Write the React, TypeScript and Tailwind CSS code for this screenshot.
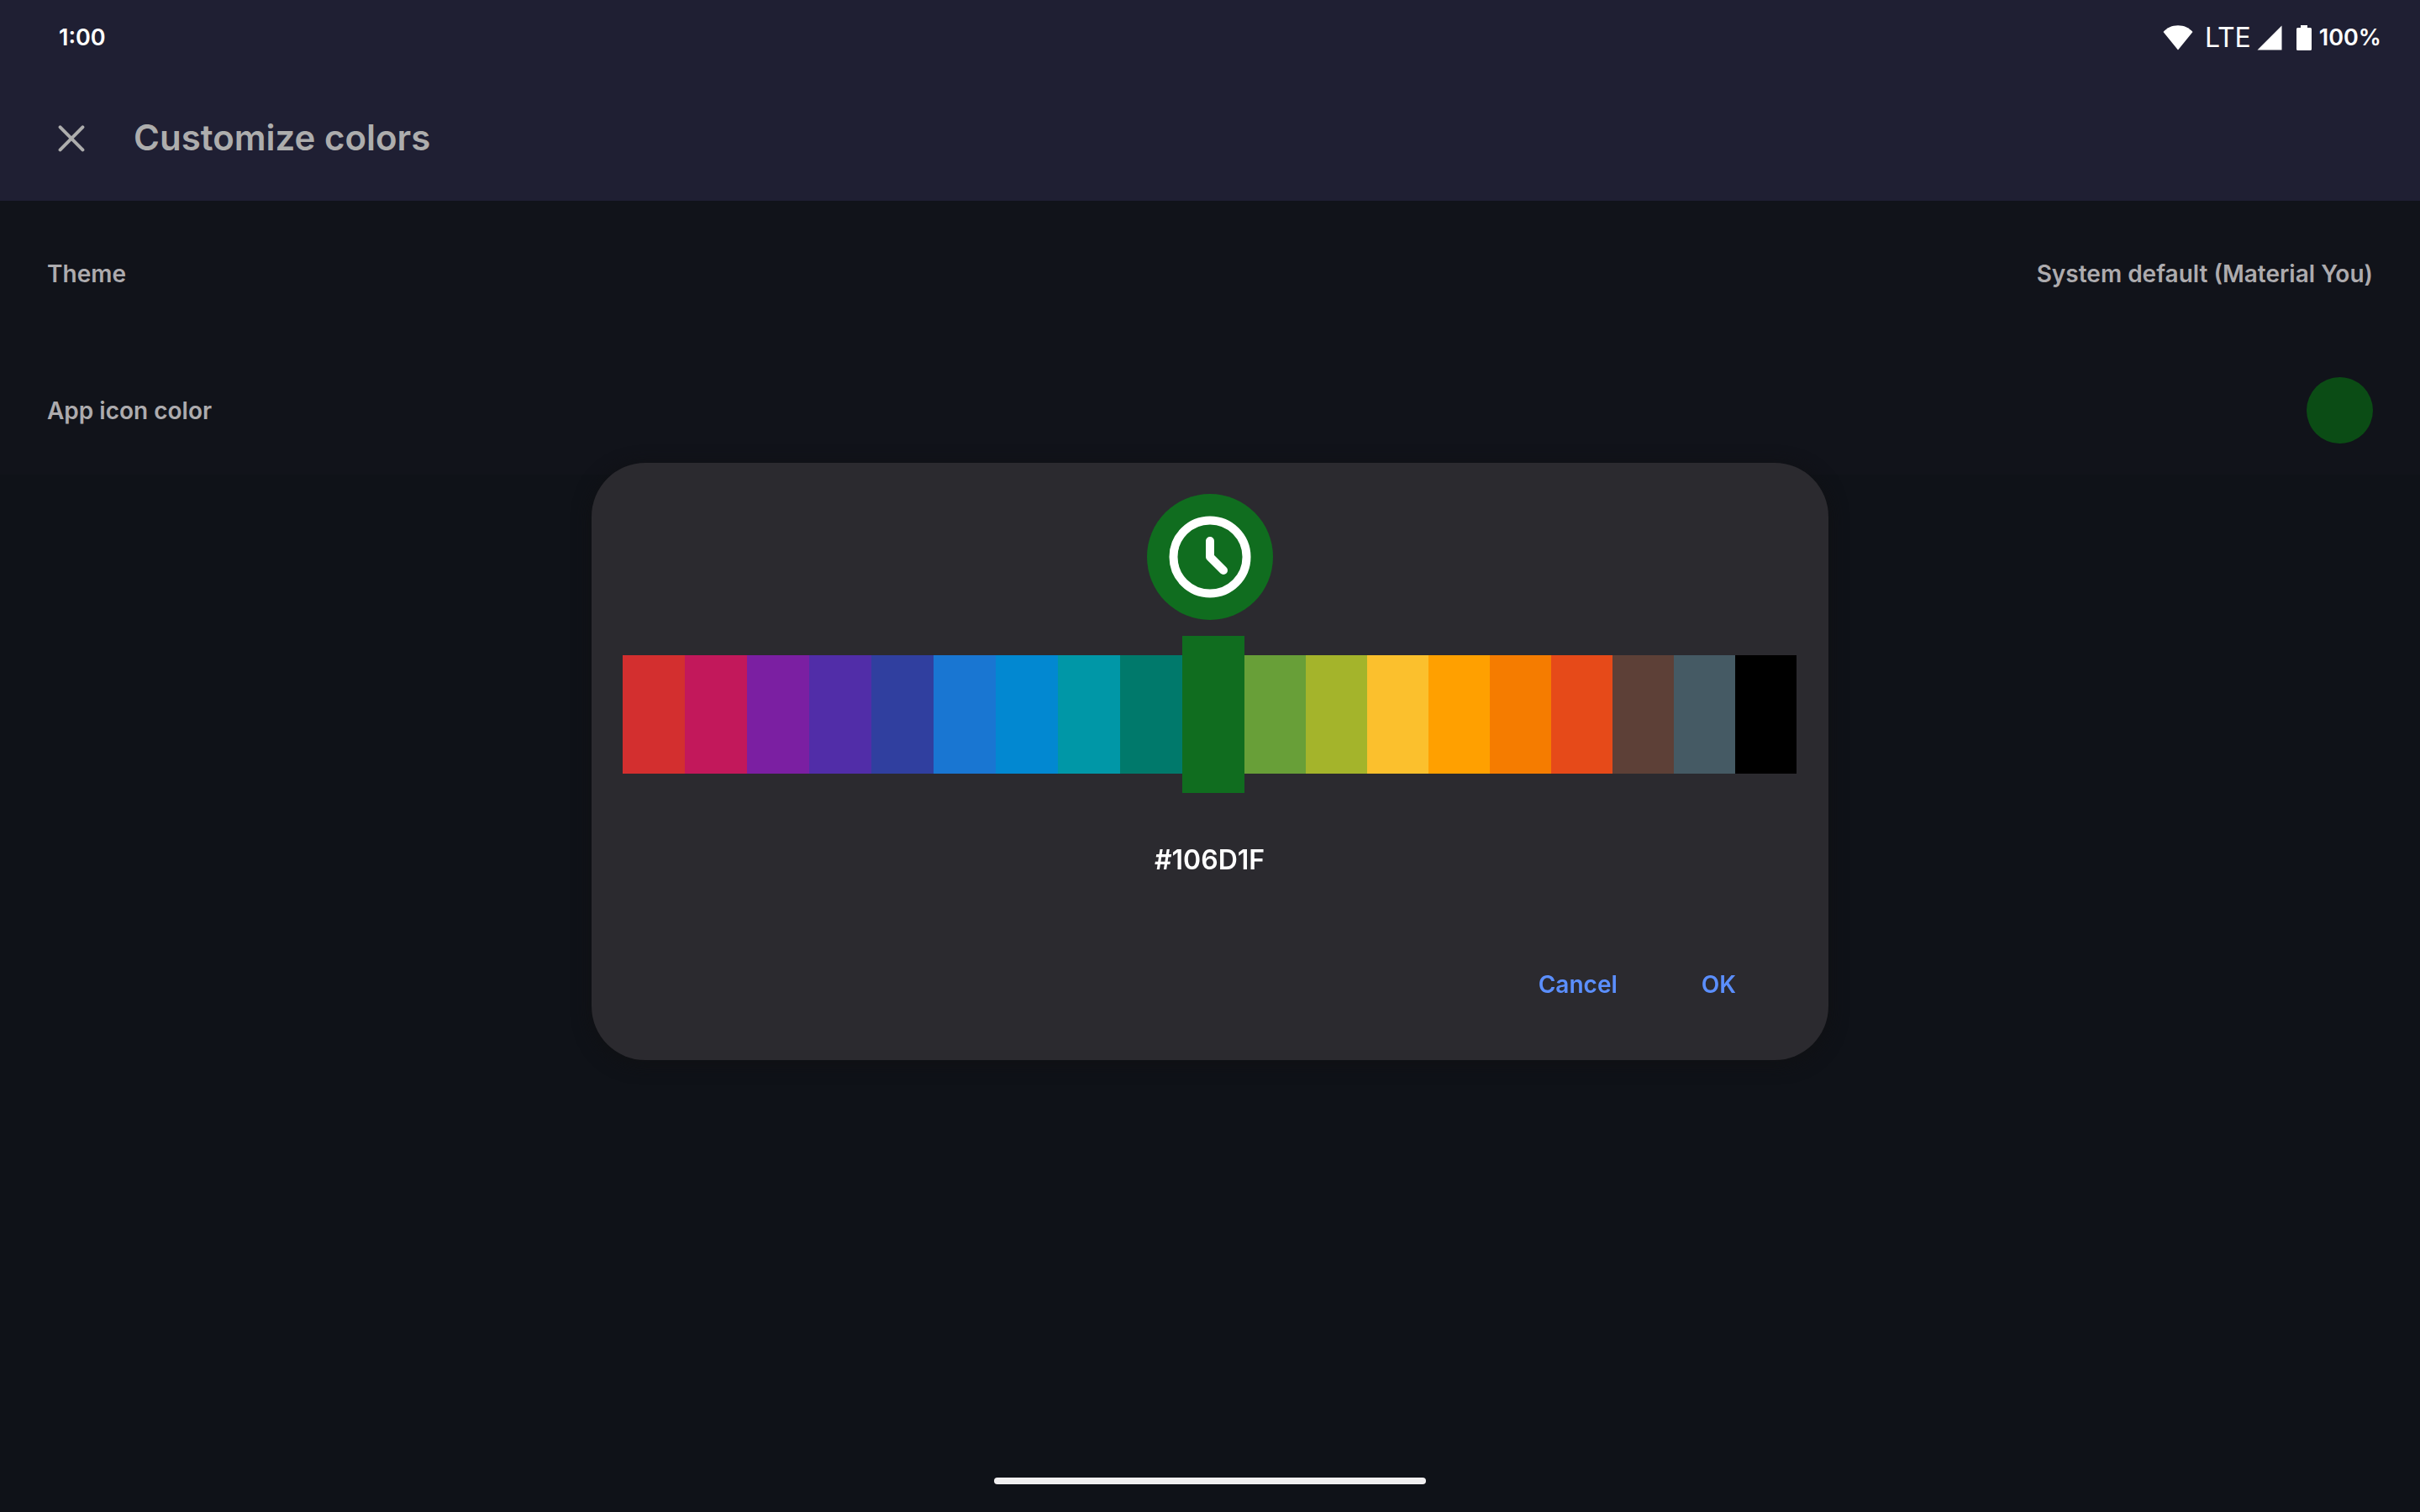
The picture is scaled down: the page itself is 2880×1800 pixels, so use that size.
import React, { useState } from "react";

const SWATCHES = [
  { name: "Red", value: "#D32F2F" },
  { name: "Pink", value: "#C2185B" },
  { name: "Purple", value: "#7B1FA2" },
  { name: "Deep purple", value: "#512DA8" },
  { name: "Indigo", value: "#303F9F" },
  { name: "Blue", value: "#1976D2" },
  { name: "Light blue", value: "#0288D1" },
  { name: "Cyan", value: "#0097A7" },
  { name: "Teal", value: "#00796B" },
  { name: "Green", value: "#106D1F" },
  { name: "Light green", value: "#689F38" },
  { name: "Lime", value: "#A4B42B" },
  { name: "Yellow", value: "#FBC02D" },
  { name: "Amber", value: "#FFA000" },
  { name: "Orange", value: "#F57C00" },
  { name: "Deep orange", value: "#E64A19" },
  { name: "Brown", value: "#5D4037" },
  { name: "Blue grey", value: "#455A64" },
  { name: "Black", value: "#000000" },
];

function WifiIcon() {
  return (
    <svg className="h-[30px] w-[36px]" viewBox="0 0 36 30" fill="currentColor" aria-hidden="true">
      <path d="M18 29.5 0.5 8C5 3 11 0.3 18 0.3S31 3 35.5 8Z" />
    </svg>
  );
}

function SignalIcon() {
  return (
    <svg className="h-[30px] w-[30px]" viewBox="0 0 30 30" fill="currentColor" aria-hidden="true">
      <path d="M0.5 29.5H29.5V0.5Z" />
    </svg>
  );
}

function BatteryIcon() {
  return (
    <svg className="h-[30px] w-[18px]" viewBox="0 0 18 30" fill="currentColor" aria-hidden="true">
      <path d="M5 0H13V3H16.5Q18 3 18 4.5V28.5Q18 30 16.5 30H1.5Q0 30 0 28.5V4.5Q0 3 1.5 3H5Z" />
    </svg>
  );
}

function CloseIcon() {
  return (
    <svg
      className="h-[32px] w-[32px]"
      viewBox="0 0 32 32"
      fill="none"
      stroke="currentColor"
      strokeWidth="4"
      strokeLinecap="round"
      aria-hidden="true"
    >
      <path d="M2.6 2.3 29.4 29.4M29.4 2.3 2.6 29.4" />
    </svg>
  );
}

function ClockIcon() {
  return (
    <svg
      className="h-[98px] w-[98px]"
      viewBox="0 0 98 98"
      fill="none"
      stroke="white"
      strokeWidth="10"
      strokeLinecap="round"
      strokeLinejoin="round"
      aria-hidden="true"
    >
      <circle cx="49" cy="49" r="43.5" />
      <path d="M49 30V49L65 65" />
    </svg>
  );
}

function StatusBar() {
  return (
    <div className="flex h-[90px] items-center justify-between pl-[70px] pr-[46px] text-white">
      <span className="text-[27px] font-semibold">1:00</span>
      <div className="flex items-center">
        <WifiIcon />
        <span className="ml-[14px] mr-[7px] text-[32px] leading-none">LTE</span>
        <SignalIcon />
        <span className="ml-[17px]">
          <BatteryIcon />
        </span>
        <span className="ml-[9px] text-[27px] font-semibold">100%</span>
      </div>
    </div>
  );
}

function ColorDialog() {
  const [color, setColor] = useState("#106D1F");
  return (
    <div className="fixed inset-0 flex items-center justify-center px-8 pt-[90px] pb-[77px]">
      <div
        role="dialog"
        aria-modal="true"
        aria-label="App icon color"
        className="flex w-full max-w-[1472px] flex-col rounded-[64px] bg-[#2b2a2f] pt-[37px] pr-[38px] pb-[42px] pl-[37px] shadow-[0_4px_20px_2px_#101114]"
      >
        <div
          className="flex size-[150px] items-center justify-center self-center rounded-full"
          style={{ backgroundColor: color }}
        >
          <ClockIcon />
        </div>
        <div className="mt-[19px] grid h-[187px] grid-cols-[repeat(10,74fr)_repeat(9,73fr)]">
          {SWATCHES.map((swatch) => (
            <button
              key={swatch.value}
              type="button"
              aria-label={swatch.name}
              aria-pressed={swatch.value === color}
              onClick={() => setColor(swatch.value)}
              className="my-[23px] aria-pressed:my-0"
              style={{ backgroundColor: swatch.value }}
            />
          ))}
        </div>
        <button type="button" className="mt-[56px] self-center text-[32px] leading-[48px] font-semibold text-white">
          {color}
        </button>
        <div className="mt-[76px] flex justify-end pr-[40px] text-[28px] font-semibold text-[#5b8fff]">
          <button type="button" className="h-[96px] px-[32px]">
            Cancel
          </button>
          <button type="button" className="ml-[36px] h-[96px] px-[32px]">
            OK
          </button>
        </div>
      </div>
    </div>
  );
}

export default function App() {
  return (
    <div className="min-h-screen bg-[#0f1218] font-['Inter',sans-serif] text-[#adabae]">
      <header className="bg-[#1f1f33]">
        <StatusBar />
        <div className="flex h-[149px] items-center pl-[69px]">
          <button type="button" aria-label="Close" className="text-[#adadad]">
            <CloseIcon />
          </button>
          <h1 className="ml-[58px] pb-[2px] text-[42px] font-semibold text-[#adadad]">Customize colors</h1>
        </div>
      </header>
      <main className="bg-[#11131a] text-[28px] font-semibold">
        <button type="button" className="flex h-[173px] w-full items-center justify-between px-[56px]">
          <span>Theme</span>
          <span>System default (Material You)</span>
        </button>
        <button type="button" className="flex h-[153px] w-full items-center justify-between px-[56px]">
          <span>App icon color</span>
          <span className="size-[79px] rounded-full bg-[#0b4c15]" />
        </button>
      </main>
      <ColorDialog />
      <div className="fixed inset-x-0 bottom-[33px] flex justify-center">
        <span className="h-[8px] w-[514px] rounded-full bg-[#f0eff0]" />
      </div>
    </div>
  );
}
